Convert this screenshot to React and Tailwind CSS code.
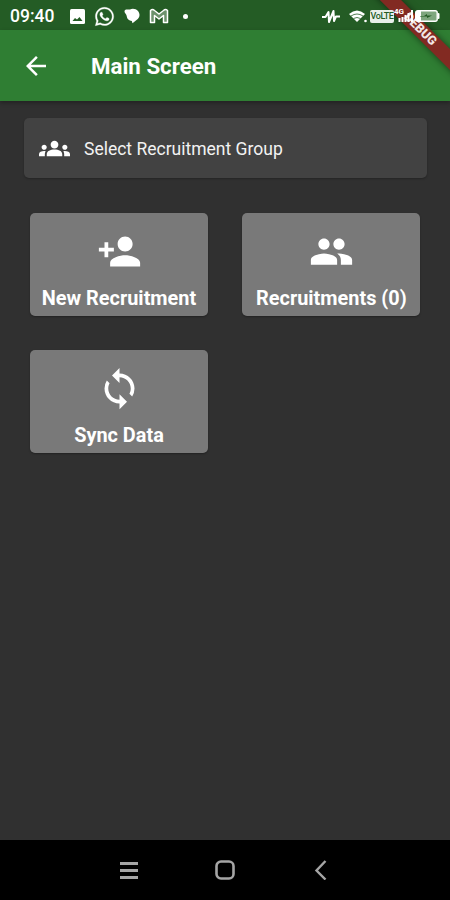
import React from "react";
import {
  MdArrowBack,
  MdGroups,
  MdPeople,
  MdPersonAdd,
  MdSync,
} from "react-icons/md";
import { FaWhatsapp } from "react-icons/fa";

const tiles = [
  { label: "New Recruitment", icon: MdPersonAdd },
  { label: "Recruitments (0)", icon: MdPeople },
  { label: "Sync Data", icon: MdSync },
];

// The bar's content sits over the debug ribbon, its background under it
const StatusBar = () => (
  <div className="flex h-[30px] items-center justify-between bg-[#245c25] pl-[10px] pr-[10px] text-white">
    <div className="flex items-center pt-[2px]">
      <span className="w-[60px] pt-[2px] text-[17.500px] font-medium leading-none">09:40</span>
      {/* gallery */}
      <svg width="15" height="15" viewBox="0 0 15 15">
        <rect width="15" height="15" rx="1.500" fill="currentColor" />
        <path d="M2.500 12 5 9l2 1.500L9.500 8l3 4z" fill="#245c25" />
      </svg>
      <FaWhatsapp size={21} className="ml-[9px]" stroke="currentColor" strokeWidth="8" />
      {/* messages */}
      <svg width="16" height="16" viewBox="0 0 16 16" className="ml-[9px]">
        <path
          d="M.5 3.500C.5 2 1.500 1.500 3 1.500h3C8.500.3 12 .8 14 3c2.500 3 1.800 7-1.500 9l-4 3.300-.7-2.300C5 12.700 3 11 2.800 8.500 2.700 6.500.5 5 .5 3.500z"
          fill="currentColor"
        />
      </svg>
      {/* gmail */}
      <svg width="20" height="16" viewBox="0 0 20 16" className="ml-[9px]">
        <path
          d="M1.500 2.500v12h4V7.500l4.500 3.500 4.500-3.500v7h4v-12q-2-2-4 0L10 6 5.500 2.500q-2-2-4 0z"
          fill="#ffffff55"
          stroke="currentColor"
          strokeWidth="1.500"
          strokeLinejoin="round"
        />
      </svg>
      <span className="ml-[14px] h-[5px] w-[5px] rounded-full bg-white" />
    </div>

    <div className="relative z-20 flex items-center pt-[2px]">
      {/* activity */}
      <svg width="18" height="15" viewBox="0 0 18 15">
        <path
          d="M0 8h3.500L6.500 3l.5 10L11.500 2l.5 10 2-4.500h4"
          fill="none"
          stroke="currentColor"
          strokeWidth="2"
          strokeLinejoin="round"
        />
      </svg>
      {/* wifi */}
      <svg width="18" height="13" viewBox="0 0 18 13" className="ml-[9px]">
        <path d="M0 4Q8 -3 16 4L8 12z" fill="currentColor" />
        <path d="M2 6q6-4 12 0M4.500 8.500q3.500-2 7 0" fill="none" stroke="#245c25" strokeWidth=".8" />
        <circle cx="16.500" cy="11" r="1.300" fill="currentColor" />
      </svg>
      <span className="ml-[3px] flex h-[13px] w-[24px] items-center justify-center rounded-[2px] bg-[#e9efe9] text-[9px] font-medium leading-none tracking-tighter text-[#245c25]">
        VoLTE
      </span>
      {/* mobile signal */}
      <svg width="21" height="19" viewBox="0 0 21 19" className="mb-[1px]">
        <text x="0" y="8" fontSize="8" fontWeight="700" fill="currentColor">
          4G
        </text>
        <path d="M5.500 16v-4M8.500 16v-5M11.500 16V9M14.500 16V7M18 16V4" stroke="currentColor" strokeWidth="2" />
      </svg>
      {/* battery */}
      <svg width="25" height="12" viewBox="0 0 25 12">
        <rect x=".7" y=".7" width="21.500" height="10.600" rx="2" fill="#7ea67e" stroke="currentColor" strokeWidth="1.400" />
        <rect x="1" y="1" width="5" height="10" fill="currentColor" />
        <path d="M5 6h4l3-2v1.500h5L12 8V6.500H5z" fill="#245c25" />
        <rect x="22.500" y="3" width="2" height="6" rx="1" fill="currentColor" />
      </svg>
    </div>
  </div>
);

const DebugBanner = () => (
  <div className="pointer-events-none absolute right-0 top-0 z-10 h-[80px] w-[80px] overflow-hidden">
    <div className="absolute left-[-10px] top-[22px] flex h-[15px] w-[120px] rotate-45 items-center justify-center bg-[#822a22] text-[12.500px] font-black leading-none text-[#f3e6e5] shadow-[0_0_7px_rgba(0,0,0,0.500)]">
      DEBUG
    </div>
  </div>
);

const Tile = ({ label, icon: Icon }) => (
  <button className="flex h-[103px] w-[178px] flex-col items-center rounded-[5px] bg-[#797979] pt-[16px] text-white shadow-[0_1px_2px_rgba(0,0,0,0.300)]">
    <Icon size={45} />
    <span className="mt-[12px] whitespace-nowrap text-[19.900px] font-bold leading-[26px]">{label}</span>
  </button>
);

const App = () => {
  return (
    <div className="relative flex h-[900px] w-[450px] flex-col overflow-hidden bg-[#303030] font-[Roboto,sans-serif]">
      <StatusBar />
      <header className="flex h-[71px] items-center bg-[#2f7e33] pl-[21px] text-white shadow-[0_2px_4px_rgba(0,0,0,0.300)]">
        <MdArrowBack size={30} />
        <h1 className="ml-[40px] pt-[2px] text-[22.300px] font-bold leading-none">Main Screen</h1>
      </header>
      <DebugBanner />

      <main className="flex-1 px-[24px] pt-[17px]">
        <div className="flex h-[60px] w-[403px] items-center rounded-[5px] bg-[#424242] pl-[15px] text-[#f2f2f2] shadow-[0_1px_2px_rgba(0,0,0,0.250)]">
          <MdGroups size={31} className="text-white" />
          <span className="ml-[14px] pt-[2px] text-[17.500px]">Select Recruitment Group</span>
        </div>

        <div className="ml-[6px] mt-[35px] flex flex-wrap gap-x-[34.400px] gap-y-[34px]">
          {tiles.map((t) => (
            <Tile key={t.label} label={t.label} icon={t.icon} />
          ))}
        </div>
      </main>

      {/* System navigation */}
      <nav className="flex h-[60px] items-center bg-black pl-[119px] text-[#a5a5a5]">
        <svg width="20" height="20" viewBox="0 0 20 20">
          <path d="M1 3.500h18M1 10.500h18M1 17.500h18" stroke="currentColor" strokeWidth="2.800" />
        </svg>
        <svg width="20" height="20" viewBox="0 0 20 20" className="ml-[76px]">
          <rect x="1.500" y="1.500" width="17" height="17" rx="4.500" fill="none" stroke="currentColor" strokeWidth="2.600" />
        </svg>
        <svg width="13" height="20" viewBox="0 0 13 20" className="ml-[79px]">
          <path d="M11.500 1 2.500 10.500l9 9" fill="none" stroke="currentColor" strokeWidth="2.400" />
        </svg>
      </nav>
    </div>
  );
};

export default App;
